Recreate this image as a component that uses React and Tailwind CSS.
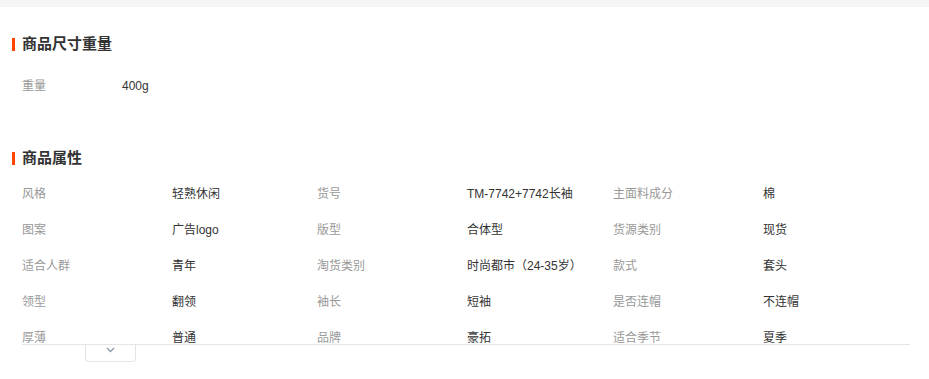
const attrs = [
  ["风格", "轻熟休闲"],
  ["货号", "TM-7742+7742长袖"],
  ["主面料成分", "棉"],
  ["图案", "广告logo"],
  ["版型", "合体型"],
  ["货源类别", "现货"],
  ["适合人群", "青年"],
  ["淘货类别", "时尚都市（24-35岁）"],
  ["款式", "套头"],
  ["领型", "翻领"],
  ["袖长", "短袖"],
  ["是否连帽", "不连帽"],
  ["厚薄", "普通"],
  ["品牌", "豪拓"],
  ["适合季节", "夏季"],
];

function Title({ children }) {
  return (
    <div className="flex items-center h-[16px] pl-[12px]">
      <span className="w-[3px] h-[13px] bg-[#ff4400]" />
      <h3 className="ml-[7px] text-[15px] leading-[16px] font-bold text-[#333]">{children}</h3>
    </div>
  );
}

export default function App() {
  return (
    <div
      className="w-[929px] h-[379px] bg-white overflow-hidden"
      style={{ fontFamily: '"Liberation Sans", "Noto Sans CJK SC", sans-serif' }}
    >
      <div className="h-[7px] bg-[#f5f5f5]" />

      <div className="mt-[29px]">
        <Title>商品尺寸重量</Title>
      </div>
      <div className="mt-[24px] flex items-center h-[20px] pl-[22px] text-[12px]">
        <span className="w-[100px] text-[#999]">重量</span>
        <span className="text-[#333]">400g</span>
      </div>

      <div className="mt-[54px]">
        <Title>商品属性</Title>
      </div>

      <div className="mt-[10px] ml-[22px] w-[888px] h-[169px] overflow-hidden border-b border-[#e5e5e5]">
        <div className="grid grid-cols-[295px_296px_1fr] text-[12px]">
          {attrs.map(([k, v]) => (
            <div key={k} className="flex items-center h-[36px]">
              <span className="w-[150px] text-[#999]">{k}</span>
              <span className="text-[#333]">{v}</span>
            </div>
          ))}
        </div>
      </div>

      <div className="ml-[85px] w-[51px] h-[17px] border border-t-0 border-[#e5e5e5] rounded-b-[4px] flex justify-center pt-[2px]">
        <svg width="9" height="6" viewBox="0 0 9 6">
          <path d="M1 1 L4.5 4.5 L8 1" fill="none" stroke="#8a98aa" strokeWidth="1.3" />
        </svg>
      </div>
    </div>
  );
}
